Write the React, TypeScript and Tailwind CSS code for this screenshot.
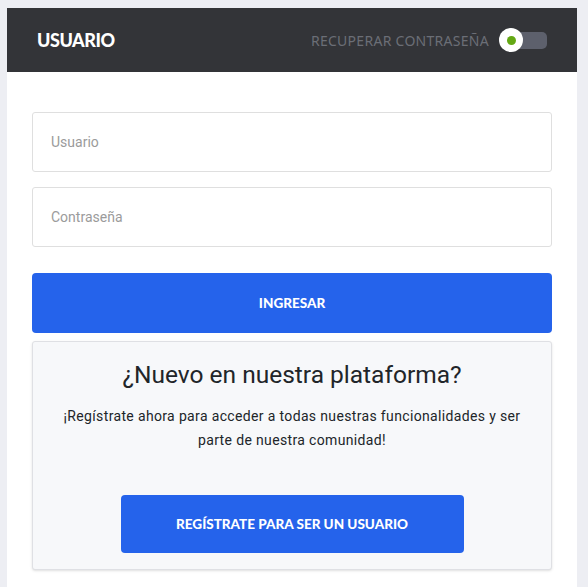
import React from 'react';

export default function App() {
  return (
    <div className="min-h-[587px] bg-[#edeef3] pl-[7px] pr-[11px] pt-2" style={{ fontFamily: 'Roboto, sans-serif' }}>
      <div className="bg-white min-h-[579px]">
        <header className="h-16 bg-[#333438] flex items-center justify-between pl-[30px] pr-[30px]">
          <h1 className="text-white text-[18px] font-black tracking-tight" style={{ fontFamily: 'Lato, sans-serif' }}>
            USUARIO
          </h1>
          <div className="flex items-center gap-[12px]">
            <span className="text-[14px] text-[#6b6e76] tracking-[0.02em]" style={{ fontFamily: '"Noto Sans", sans-serif' }}>
              RECUPERAR CONTRASEÑA
            </span>
            <div className="relative w-[46px] h-[17px] rounded-[5px] bg-[#5d606c]">
              <div className="absolute -left-[2px] top-1/2 -translate-y-1/2 w-[24px] h-[24px] rounded-full bg-white flex items-center justify-center">
                <div className="w-[9px] h-[9px] rounded-full bg-[#64a814]" />
              </div>
            </div>
          </div>
        </header>

        <div className="px-[25px] pt-10 pb-4">
          <div className="flex flex-col gap-[15px]">
            <input
              placeholder="Usuario"
              className="h-[60px] w-full rounded-[3px] border border-[#dfdfdf] px-[18px] text-[14px] text-gray-700 placeholder:text-[#9b9b9b] outline-none"
            />
            <input
              type="password"
              placeholder="Contraseña"
              className="h-[60px] w-full rounded-[3px] border border-[#dfdfdf] px-[18px] text-[14px] text-gray-700 placeholder:text-[#9b9b9b] outline-none"
            />
          </div>

          <button
            className="mt-[26px] h-[60px] w-full rounded-[4px] bg-[#2563eb] text-white text-[13.5px] font-black"
            style={{ fontFamily: 'Lato, sans-serif' }}
          >
            INGRESAR
          </button>

          <section className="mt-[8px] rounded-[3px] border border-[#dfe0e4] bg-[#f7f8fa] shadow-sm px-6 pt-[16px] pb-4 flex flex-col items-center text-center">
            <h2 className="text-[24.5px] text-[#212529] leading-[34px]">¿Nuevo en nuestra plataforma?</h2>
            <p className="mt-[12px] text-[14px] leading-6 text-[#212529] tracking-[0.35px] max-w-[470px]">
              ¡Regístrate ahora para acceder a todas nuestras funcionalidades y ser parte de nuestra comunidad!
            </p>
            <button
              className="mt-[43px] h-[58px] w-[343px] rounded-[4px] bg-[#2563eb] text-white text-[13.5px] font-black"
              style={{ fontFamily: 'Lato, sans-serif' }}
            >
              REGÍSTRATE PARA SER UN USUARIO
            </button>
          </section>
        </div>
      </div>
    </div>
  );
}
